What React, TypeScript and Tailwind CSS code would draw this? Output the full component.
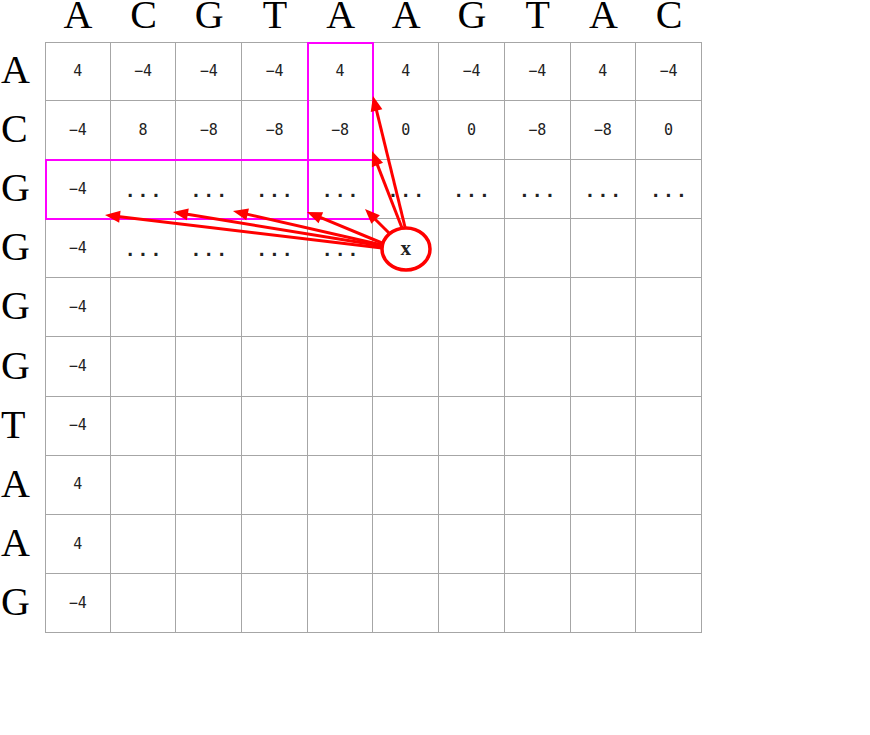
const colHeads = ['A', 'C', 'G', 'T', 'A', 'A', 'G', 'T', 'A', 'C'];
const rowHeads = ['A', 'C', 'G', 'G', 'G', 'G', 'T', 'A', 'A', 'G'];

const D = '...';
const rows: string[][] = [
  ['4', '−4', '−4', '−4', '4', '4', '−4', '−4', '4', '−4'],
  ['−4', '8', '−8', '−8', '−8', '0', '0', '−8', '−8', '0'],
  ['−4', D, D, D, D, D, D, D, D, D],
  ['−4', D, D, D, D, 'x', '', '', '', ''],
  ['−4', '', '', '', '', '', '', '', '', ''],
  ['−4', '', '', '', '', '', '', '', '', ''],
  ['−4', '', '', '', '', '', '', '', '', ''],
  ['4', '', '', '', '', '', '', '', '', ''],
  ['4', '', '', '', '', '', '', '', '', ''],
  ['−4', '', '', '', '', '', '', '', '', ''],
];

// arrows: [startX, startY, tipX, tipY]
const arrows: [number, number, number, number][] = [
  [405, 227, 373, 96],
  [402, 228, 372, 151],
  [389, 233, 365, 209],
  [382, 243, 307, 212],
  [382, 245, 233, 211],
  [382, 246, 173, 212],
  [382, 248, 105, 215],
];

function Arrow({ a }: { a: [number, number, number, number] }) {
  const [x1, y1, x2, y2] = a;
  const dx = x2 - x1;
  const dy = y2 - y1;
  const len = Math.hypot(dx, dy);
  const ux = dx / len;
  const uy = dy / len;
  const hl = 15;
  const hw = 6;
  const bx = x2 - ux * hl;
  const by = y2 - uy * hl;
  const pts = `${x2},${y2} ${bx - uy * hw},${by + ux * hw} ${bx + uy * hw},${by - ux * hw}`;
  return (
    <g>
      <line x1={x1} y1={y1} x2={bx + ux * 2} y2={by + uy * 2} stroke="#ff0000" strokeWidth={3} />
      <polygon points={pts} fill="#ff0000" />
    </g>
  );
}

function Cell({ v }: { v: string }) {
  if (v === 'x') {
    return <span className="text-[21px] font-bold font-['Liberation_Serif',serif]">x</span>;
  }
  if (v === D) {
    return <span className="text-[18px] font-bold tracking-[2px] pl-[2px] mt-[2px]">...</span>;
  }
  return <span className="text-[15px]">{v}</span>;
}

export default function App() {
  return (
    <div className="relative w-[870px] h-[735px] bg-white text-black font-['DejaVu_Serif',serif] overflow-hidden">
      <div className="grid grid-cols-[45px_repeat(10,65.7px)] grid-rows-[42px_repeat(10,59.1px)]">
        <div />
        {colHeads.map((c, i) => (
          <div key={i} className="flex items-start justify-center text-[40px] leading-[30px] font-['Liberation_Serif',serif]">
            {c}
          </div>
        ))}
        {rows.map((r, ri) => (
          <>
            <div key={`h${ri}`} className="flex items-center justify-start pl-[1px] pb-[3px] text-[40px] leading-[40px] font-['Liberation_Serif',serif]">
              {rowHeads[ri]}
            </div>
            {r.map((v, ci) => (
              <div
                key={`${ri}-${ci}`}
                className={`flex items-center justify-center border-[#a6a6a6] border-r border-b ${ci === 0 ? 'border-l' : ''} ${ri === 0 ? 'border-t' : ''} font-['DejaVu_Sans_Mono',monospace] text-[#222]`}
              >
                <Cell v={v} />
              </div>
            ))}
          </>
        ))}
      </div>

      <svg className="absolute left-0 top-0" width={870} height={735}>
        <rect x={308} y={43} width={65} height={176} fill="none" stroke="#ff00ff" strokeWidth={2} />
        <rect x={46} y={160} width={327} height={59} fill="none" stroke="#ff00ff" strokeWidth={2} />
        <ellipse cx={406} cy={249} rx={24} ry={21} fill="none" stroke="#ff0000" strokeWidth={3.5} />
        {arrows.map((a, i) => (
          <Arrow key={i} a={a} />
        ))}
      </svg>
    </div>
  );
}
